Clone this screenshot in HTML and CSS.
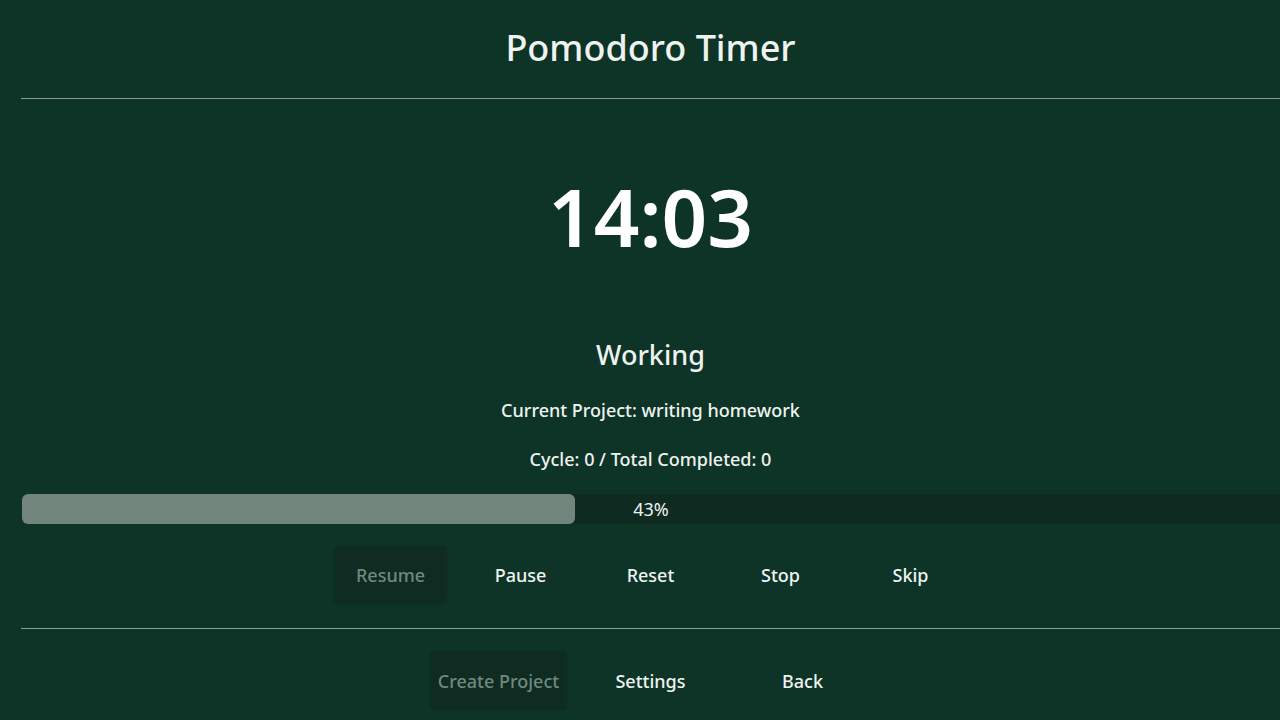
FILE: index.html
```html
<!DOCTYPE html>
<html lang="en">
<head>
<meta charset="utf-8">
<title>Pomodoro Timer</title>
<link rel="stylesheet" href="styles.css">
</head>
<body>
<div class="app">
  <header class="header">
    <h1 class="title">Pomodoro Timer</h1>
  </header>
  <hr class="rule">
  <main class="main">
    <div class="clock">14:03</div>
    <div class="state">Working</div>
    <div class="info">Current Project: writing homework</div>
    <div class="info">Cycle: 0 / Total Completed: 0</div>
    <div class="progress">
      <div class="progress-fill" style="width: 43%"></div>
      <span class="progress-label">43%</span>
    </div>
    <div class="controls">
      <button class="btn btn-disabled" disabled>Resume</button>
      <button class="btn">Pause</button>
      <button class="btn">Reset</button>
      <button class="btn">Stop</button>
      <button class="btn">Skip</button>
    </div>
  </main>
  <hr class="rule">
  <nav class="footer">
    <button class="btn btn-wide btn-disabled" disabled>Create Project</button>
    <button class="btn btn-wide">Settings</button>
    <button class="btn btn-wide">Back</button>
  </nav>
</div>
</body>
</html>
```

FILE: styles.css
```css
html, body {
  margin: 0;
  padding: 0;
  background: #0e3327;
  height: 100%;
  overflow: hidden;
}
body {
  font-family: "Noto Sans", "Open Sans", sans-serif;
  color: #eef3f0;
}
.app {
  width: 1259px;
  height: 720px;
  padding-left: 21px;
  display: flex;
  flex-direction: column;
}
.header {
  height: 98px;
  display: flex;
  align-items: center;
  justify-content: center;
}
.title {
  margin: 0;
  font-size: 36px;
  font-weight: 500;
  line-height: 1;
  padding-bottom: 2px;
}
.rule {
  margin: 0;
  width: 1300px;
  border: none;
  height: 1px;
  background: #8c9b95;
}
.main {
  display: flex;
  flex-direction: column;
  align-items: center;
  height: 529px;
}
.clock {
  font-size: 80px;
  font-weight: 600;
  line-height: 1;
  margin-top: 77px;
  color: #ffffff;
}
.state {
  font-size: 27px;
  font-weight: 500;
  line-height: 1;
  margin-top: 85px;
}
.info {
  font-size: 18px;
  font-weight: 500;
  line-height: 1;
  margin-top: 33px;
}
.info + .info {
  margin-top: 31px;
}
.progress {
  align-self: flex-start;
  margin-left: 1px;
  margin-top: 26px;
  width: 1286px;
  height: 30px;
  background: #0f2a21;
  border-radius: 6px;
  position: relative;
  display: flex;
  align-items: center;
  justify-content: center;
}
.progress-fill {
  position: absolute;
  left: 0;
  top: 0;
  bottom: 0;
  background: #72857c;
  border-radius: 6px;
}
.progress-label {
  position: relative;
  font-size: 18px;
  font-weight: 400;
  margin-left: -28px;
}
.controls {
  display: flex;
  gap: 19px;
  margin-top: 23px;
}
.btn {
  width: 111px;
  height: 56px;
  border: none;
  background: transparent;
  color: #eef3f0;
  font-family: "Noto Sans", "Open Sans", sans-serif;
  font-size: 18px;
  font-weight: 500;
  border-radius: 4px;
  padding: 0;
  cursor: pointer;
}
.btn-disabled {
  background: #0f2b22;
  color: #6e8a7e;
  box-shadow: 0 0 3px rgba(10, 30, 22, 0.6);
  cursor: default;
}
.footer {
  display: flex;
  justify-content: center;
  gap: 17px;
  padding-top: 23px;
}
.btn-wide {
  width: 135px;
  height: 57px;
}
```
